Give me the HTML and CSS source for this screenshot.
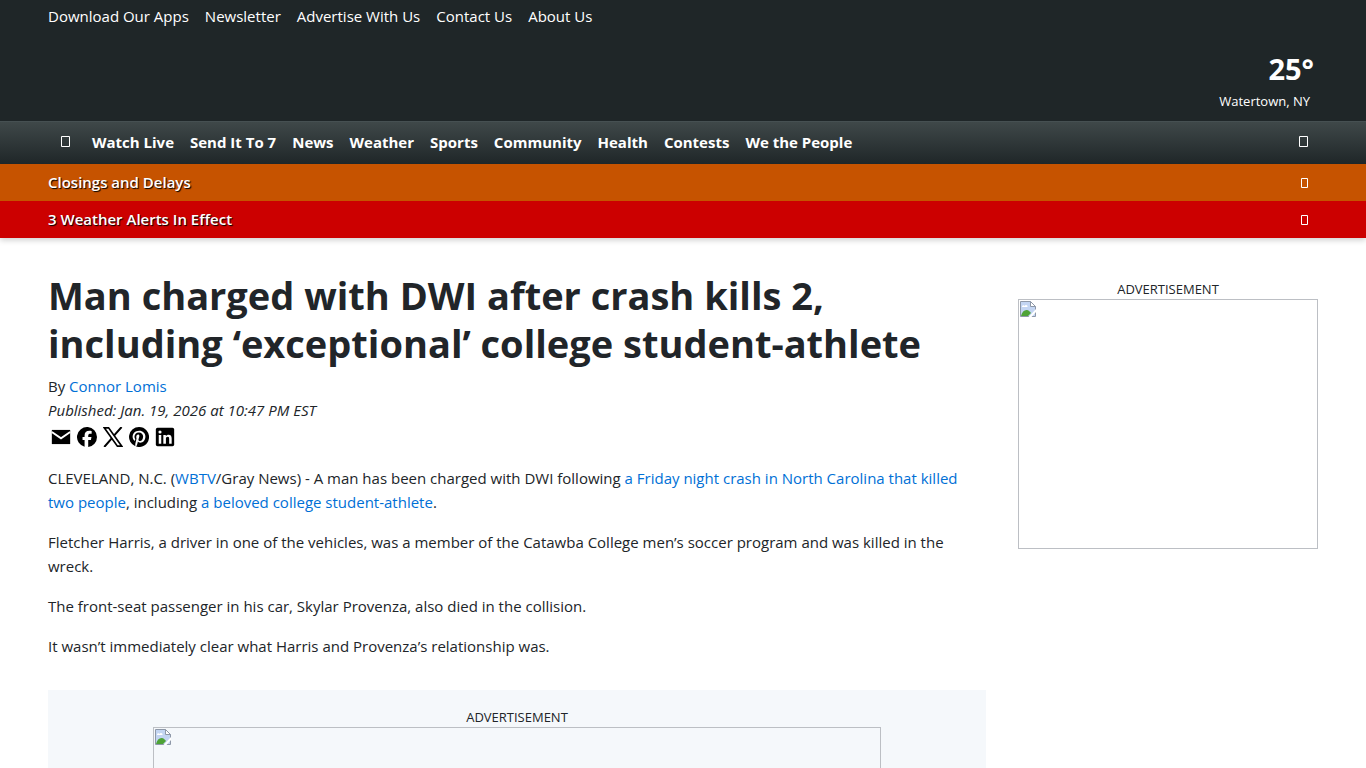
FILE: index.html
```html
<!DOCTYPE html>
<html lang="en">
<head>
<meta charset="utf-8">
<meta name="viewport" content="width=device-width, initial-scale=1">
<title>Man charged with DWI after crash kills 2</title>
<link rel="stylesheet" href="styles.css">
</head>
<body>
<svg class="sprite" aria-hidden="true">
  <symbol id="broken" viewBox="0 0 16 16">
    <path d="M.5 .5h10l5 5v10H.5z" fill="#c3d5f2" stroke="#8e98a8"/>
    <path d="M2 6c0-2 2-2 2.500-1C5.500 3 8 4 7.500 6z" fill="#fff"/>
    <path d="M1 15c1-4 3-6 5.500-6S10 11 11 12l-3 3z" fill="#4ea336"/>
    <path d="M10.500 .5v5h5z" fill="#fff" stroke="#8e98a8"/>
    <path d="M8.500 16 16 8v3l-4.500 5z" fill="#fff"/>
  </symbol>
</svg>
<header class="header">
  <div class="masthead">
    <nav class="utility" aria-label="Utility">
      <a href="#">Download Our Apps</a><a href="#">Newsletter</a><a href="#">Advertise With Us</a><a href="#">Contact Us</a><a href="#">About Us</a>
    </nav>
    <a class="weather" href="#"><strong class="temp">25°</strong><span class="city">Watertown, NY</span></a>
  </div>
  <div class="navbar">
    <nav class="menu" aria-label="Main">
      <a class="home" href="#" aria-label="Home"><svg width="10" height="12" viewBox="0 0 10 12"><path d="M.5 .5h8v10h-8z"/></svg></a>
      <a href="#">Watch Live</a><a href="#">Send It To 7</a><a href="#">News</a><a href="#">Weather</a><a href="#">Sports</a><a href="#">Community</a><a href="#">Health</a><a href="#">Contests</a><a href="#">We the People</a>
    </nav>
    <button class="icon-button" type="button" aria-label="Search"><svg width="10" height="12" viewBox="0 0 10 12"><path d="M.5 .5h8v10h-8z"/></svg></button>
  </div>
  <div class="alert closings"><a href="#">Closings and Delays</a><button class="icon-button" type="button" aria-label="Show closings"><svg width="8" height="10" viewBox="0 0 8 10"><path d="M.5 .5h6v9h-6z"/></svg></button></div>
  <div class="alert warnings"><a href="#">3 Weather Alerts In Effect</a><button class="icon-button" type="button" aria-label="Show weather alerts"><svg width="8" height="10" viewBox="0 0 8 10"><path d="M.5 .5h6v9h-6z"/></svg></button></div>
</header>
<main class="page">
  <article class="article">
    <h1>Man charged with DWI after crash kills 2, including ‘exceptional’ college student-athlete</h1>
    <div class="byline">By <a href="#">Connor Lomis</a></div>
    <div class="published">Published: Jan. 19, 2026 at 10:47 PM EST</div>
    <div class="share">
      <a href="#" aria-label="Email"><svg viewBox="0 0 24 24"><path d="M1 3.500h22v17H1z"/><path d="m1 6 11 7.500L23 6" fill="none" stroke="#fff" stroke-width="2.400"/></svg></a>
      <a href="#" aria-label="Facebook"><svg viewBox="0 0 24 24"><path d="M24 12a12 12 0 1 0-14.900 11.650v-7.980H6.630V12H9.100v-1.580c0-4.080 1.850-5.980 5.860-5.980.76 0 2.070.15 2.610.3v3.320c-.28-.03-.78-.04-1.390-.04-1.970 0-2.730.74-2.730 2.680V12h3.920l-.67 3.670h-3.250v8.240A12 12 0 0 0 24 12z"/></svg></a>
      <a href="#" aria-label="X"><svg viewBox="0 0 24 24"><path d="M1.500 1h5.200l15.800 22h-5.200z" fill="none" stroke="#000" stroke-width="2"/><path d="m22.300 0-9.100 10.400M10.500 13.600 1.500 24" fill="none" stroke="#000" stroke-width="2.400"/></svg></a>
      <a href="#" aria-label="Pinterest"><svg viewBox="0 0 24 24"><path d="M12 0a12 12 0 0 0-4.370 23.170c-.1-.95-.2-2.400.04-3.440l1.400-5.960s-.35-.72-.35-1.780c0-1.670.97-2.910 2.170-2.910 1.020 0 1.520.77 1.520 1.690 0 1.030-.66 2.570-1 3.990-.28 1.200.6 2.170 1.780 2.170 2.130 0 3.770-2.250 3.770-5.490 0-2.870-2.060-4.880-5.010-4.880-3.410 0-5.410 2.560-5.410 5.200 0 1.030.4 2.130.89 2.730.1.120.11.220.08.340l-.33 1.360c-.05.220-.17.270-.4.160-1.500-.7-2.430-2.890-2.430-4.650 0-3.780 2.750-7.260 7.930-7.260 4.160 0 7.400 2.970 7.400 6.930 0 4.140-2.610 7.460-6.230 7.460-1.220 0-2.360-.63-2.750-1.380l-.75 2.850c-.27 1.040-1 2.350-1.490 3.150A12 12 0 1 0 12 0z"/></svg></a>
      <a href="#" aria-label="LinkedIn"><svg viewBox="0 0 24 24"><rect x="1" y="1" width="22" height="22" rx="2"/><path fill="#fff" d="M4.500 9.500h3V20h-3zM10 9.500h3v1.500c.8-1.200 1.900-1.800 3.300-1.800 2.800 0 3.700 1.800 3.700 4.600V20h-3v-5.600c0-1.500-.4-2.600-1.700-2.600-1.500 0-2.200 1-2.200 2.700V20H10z"/><circle cx="6" cy="6" r="1.900" fill="#fff"/></svg></a>
    </div>
    <p>CLEVELAND, N.C. (<a href="#">WBTV</a>/Gray News) - A man has been charged with DWI following <a href="#">a Friday night crash in North Carolina that killed two people</a>, including <a href="#">a beloved college student-athlete</a>.</p>
    <p>Fletcher Harris, a driver in one of the vehicles, was a member of the Catawba College men’s soccer program and was killed in the wreck.</p>
    <p>The front-seat passenger in his car, Skylar Provenza, also died in the collision.</p>
    <p>It wasn’t immediately clear what Harris and Provenza’s relationship was.</p>
    <aside class="ad inline-ad"><span>ADVERTISEMENT</span><a class="creative leaderboard" href="#" aria-label="Advertisement"><svg width="16" height="16"><use href="#broken"/></svg></a></aside>
  </article>
  <aside class="ad"><span>ADVERTISEMENT</span><a class="creative rectangle" href="#" aria-label="Advertisement"><svg width="16" height="16"><use href="#broken"/></svg></a></aside>
</main>
</body>
</html>
```
FILE: styles.css
```css
* { box-sizing: border-box; }
body {
  margin: 0;
  background: #fff;
  color: #212529;
  font: 15px/24px "Open Sans", "Noto Sans", sans-serif;
}
a { color: #0070d6; text-decoration: none; }
svg { display: block; }
.sprite { position: absolute; width: 0; height: 0; }

.header { color: #fff; box-shadow: 0 2px 6px rgba(0, 0, 0, .2); }
.header a { color: #fff; }
.masthead {
  display: flex;
  flex-direction: column;
  gap: 23px;
  padding: 4px 48px 8px;
  background: #1f2628;
}
.utility, .menu { display: flex; gap: 16px; }
.weather {
  display: flex;
  flex-direction: column;
  gap: 2px;
  align-items: flex-end;
  align-self: flex-end;
}
.temp { padding-right: 4px; font-size: 29px; line-height: 36px; }
.city { padding-right: 8px; font-size: 13px; }
.navbar, .alert {
  display: flex;
  align-items: center;
  justify-content: space-between;
  padding: 0 48px;
}
.navbar {
  height: 43px;
  padding-bottom: 2px;
  border-top: 1px solid #465052;
  background: linear-gradient(#3f4849, #1f2628);
  font-weight: 700;
}
.home {
  display: flex;
  align-items: center;
  justify-content: center;
  width: 28px;
  padding-left: 8px;
}
.header svg { fill: none; stroke: #fff; }
.icon-button { padding: 8px 9px; border: 0; background: none; }
.alert { height: 37px; font-weight: 600; text-shadow: 1px 1px 1px #000; }
.alert a { padding-bottom: 2px; }
.closings { background: #c65300; }
.warnings { background: #c00; }

.page {
  display: grid;
  grid-template-columns: minmax(0, 1fr) 300px;
  gap: 32px;
  padding: 33px 48px 0;
}
h1 { margin: 0 0 7px; font-size: 38px; line-height: 48px; }
.published { font-style: italic; }
.share { display: flex; gap: 6px; padding: 5px 3px 0; }
.share svg { width: 20px; height: 20px; }
p { margin: 16px 0 0; }
.share + p { margin-top: 19px; }
.ad {
  display: flex;
  flex-direction: column;
  align-items: center;
  padding-top: 9px;
  font-size: 13px;
  line-height: 19px;
}
.inline-ad { margin-top: 32px; padding: 18px 16px 32px; background: #f5f8fb; }
.creative { width: 100%; padding: 1px; border: 1px solid #bcbfc4; }
.rectangle { height: 250px; }
.leaderboard { max-width: 728px; height: 90px; }
```
